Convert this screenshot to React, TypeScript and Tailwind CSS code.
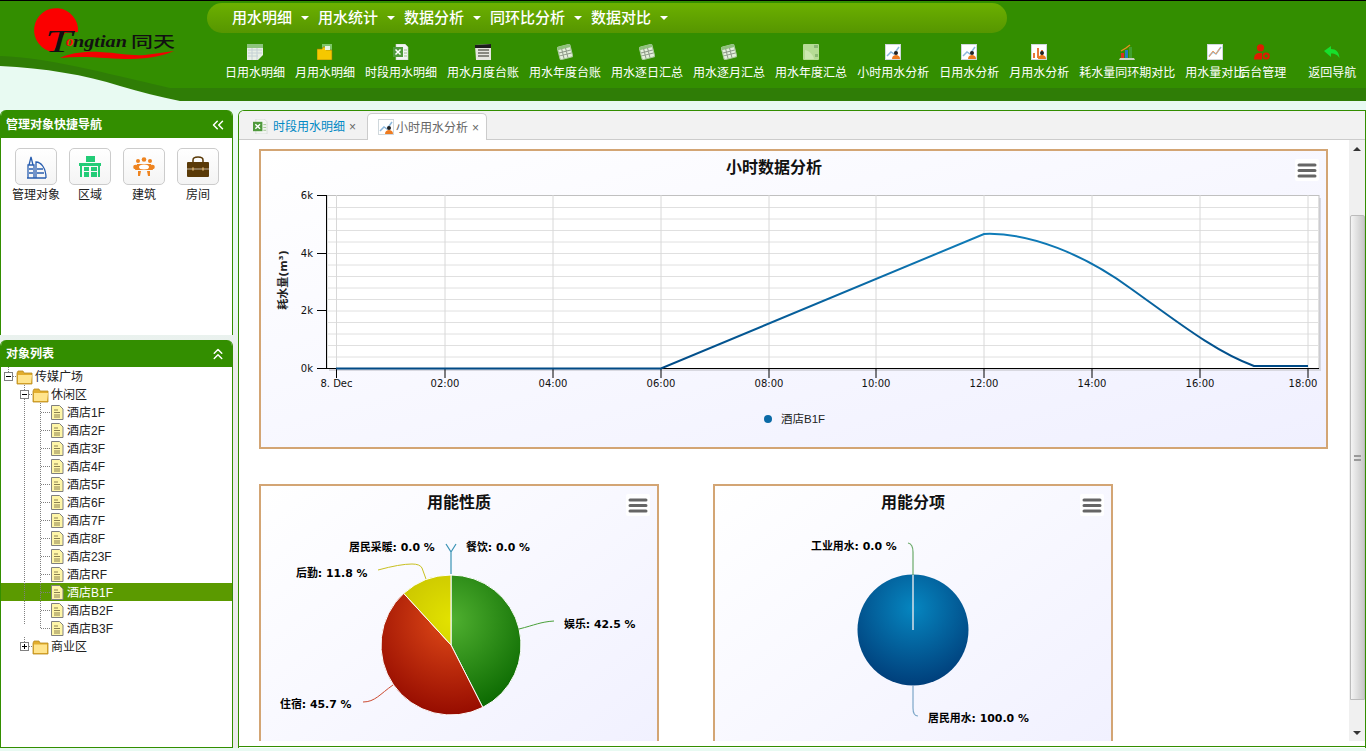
import React from "react";
import { ChevronsLeft, ChevronsUp } from "lucide-react";

const CJK = "'Liberation Sans','Noto Sans CJK SC',sans-serif";
const LABEL = "'DejaVu Sans','Noto Sans CJK SC',sans-serif";

// toolbar icons, all on a 16x16 box
const SheetIcon = () => (
  <svg width="16" height="16" viewBox="0 0 16 16">
    <path d="M0 0h16v11l-5 5H0z" fill="#e8efe6" />
    <rect width="16" height="4" fill="#8cc47c" />
    <path d="M1 6h14M1 9h14M1 12h10M5 4v12M10 4v12" stroke="#c4d0d4" />
  </svg>
);
const FolderSheetIcon = () => (
  <svg width="16" height="16" viewBox="0 0 16 16">
    <rect x="5" y="0" width="10" height="9" fill="#7fc66a" />
    <path d="M0 5h5l1-2h3v3h6v10H0z" fill="#f5c800" stroke="#8a7a10" strokeWidth=".6" />
    <rect x="8" y="2" width="5" height="4" fill="#e9f5e0" />
  </svg>
);
const ExcelIcon = ({ size = 16 }: { size?: number }) => (
  <svg width={size} height={size} viewBox="0 0 16 16">
    <path d="M3 0h9l3 3v13H3z" fill="#f3f5f3" stroke="#c8d0c8" strokeWidth=".6" />
    <rect x="0" y="3" width="10" height="10" fill="#4f9a3c" />
    <path d="M2.500 5.500l5 5M7.500 5.500l-5 5" stroke="#fff" strokeWidth="1.500" />
    <path d="M11 6h3M11 9h3M11 12h3" stroke="#9cc48c" />
  </svg>
);
const CalendarIcon = () => (
  <svg width="16" height="16" viewBox="0 0 16 16">
    <path d="M0 1l16-1v16H1z" fill="#e6e6e0" />
    <path d="M0 1l16-1v4H0z" fill="#1c1c1c" />
    <path d="M3 6h11M3 9h11M3 12h11" stroke="#6a6a60" strokeWidth="1.400" />
  </svg>
);
const TiltSheetIcon = () => (
  <svg width="16" height="16" viewBox="0 0 16 16">
    <g transform="rotate(-14 8 8)">
      <rect x="1.500" y="1.500" width="13" height="13" rx="1.500" fill="#e4efdc" stroke="#a9c79b" />
      <rect x="1.500" y="1.500" width="13" height="3" fill="#8fc27c" />
      <path d="M2 7.500h12M2 10.500h12M5.500 4v10M9.500 4v10" stroke="#8f9a8a" />
    </g>
  </svg>
);
const LedgerIcon = () => (
  <svg width="16" height="16" viewBox="0 0 16 16">
    <rect width="16" height="16" rx="1" fill="#b6dc94" />
    <path d="M2 6c5 1 8 5 9 9H2z" fill="#cce8b0" />
    <rect x="11" y="1" width="4" height="3" fill="#8cb874" />
    <rect x="12" y="10" width="3" height="3" fill="#8cb874" />
  </svg>
);
const ChartIcon = ({ kind = "line" }: { kind?: "line" | "bars" | "plain" }) => (
  <svg width="16" height="16" viewBox="0 0 16 16">
    <rect x=".5" y=".5" width="15" height="15" fill="#fff" stroke="#d0d8dc" />
    {kind === "bars" ? (
      <path d="M3 14V9M7 14V4M11 14V6" stroke="#e8763a" strokeWidth="2" />
    ) : (
      <path d="M2 12l4-4 3 2 5-7" fill="none" stroke="#8cb8dc" strokeWidth="1.500" />
    )}
    {kind === "plain" ? (
      <path d="M2 13l4-6 3 3 4-6" fill="none" stroke="#f0a060" />
    ) : (
      <>
        <circle cx="11" cy="9" r="2" fill="#222" />
        <path d="M7 15c0-3 2-4 4-4s4 1 4 4z" fill="#ee7b20" />
      </>
    )}
  </svg>
);
const CompareIcon = () => (
  <svg width="16" height="16" viewBox="0 0 16 16">
    <path d="M1 14h14l1 2H0z" fill="#c8d4c0" />
    <rect x="2" y="9" width="3" height="5" fill="#d83020" />
    <rect x="6" y="6" width="3" height="8" fill="#2080c0" />
    <rect x="10" y="3" width="3" height="11" fill="#40a030" />
    <path d="M2 7l5-3 4-3" fill="none" stroke="#e89020" strokeWidth="1.400" />
  </svg>
);
const AdminIcon = () => (
  <svg width="16" height="16" viewBox="0 0 16 16">
    <circle cx="6.500" cy="3.800" r="3.600" fill="#dd1c00" />
    <path d="M0 15.500c0-5 2-6.500 6-6.500h2v6.500z" fill="#dd1c00" />
    <circle cx="12.200" cy="12" r="2.600" fill="none" stroke="#dd1c00" strokeWidth="2" />
  </svg>
);
const BackIcon = () => (
  <svg width="16" height="16" viewBox="0 0 16 16">
    <path d="M0 7l7-5v3c5 0 8 3 8.500 9-2-3-4-4.500-8.500-4.500V13z" fill="#17e02c" />
  </svg>
);

const tools: { label: string; icon: React.ReactNode; cls?: string }[] = [
  { label: "日用水明细", icon: <SheetIcon /> },
  { label: "月用水明细", icon: <FolderSheetIcon /> },
  { label: "时段用水明细", icon: <ExcelIcon /> },
  { label: "用水月度台账", icon: <CalendarIcon /> },
  { label: "用水年度台账", icon: <TiltSheetIcon /> },
  { label: "用水逐日汇总", icon: <TiltSheetIcon /> },
  { label: "用水逐月汇总", icon: <TiltSheetIcon /> },
  { label: "用水年度汇总", icon: <LedgerIcon /> },
  { label: "小时用水分析", icon: <ChartIcon /> },
  { label: "日用水分析", icon: <ChartIcon /> },
  { label: "月用水分析", icon: <ChartIcon kind="bars" /> },
  { label: "耗水量同环期对比", icon: <CompareIcon /> },
  { label: "用水量对比", icon: <ChartIcon kind="plain" /> },
  { label: "后台管理", icon: <AdminIcon />, cls: "-ml-[17px]" },
  { label: "返回导航", icon: <BackIcon />, cls: "ml-[12px]" },
];

const menus = ["用水明细", "用水统计", "数据分析", "同环比分析", "数据对比"];

const Logo = () => (
  <svg width="207" height="66" viewBox="0 1 207 66" className="shrink-0">
    {/* sun, cut away under the bar of the T */}
    <path d="M78 32A22 22 0 1 0 53 52L65 33Z" fill="#fb0000" />
    <path d="M60 58C70 53 85 51 100 52C120 53 130 56 145 55C155 54 165 52 174 51C165 55 150 59 130 59C110 59 85 55 60 58Z" fill="#f20000" />
    <text x="45" y="52" fontFamily="'Liberation Serif',serif" fontStyle="italic" fontSize="32" textLength="27" lengthAdjust="spacingAndGlyphs" fill="#111">T</text>
    <text x="66" y="46" fontFamily="'Liberation Serif',serif" fontStyle="italic" fontWeight="700" fontSize="15" fill="#ff0a0a">o</text>
    <text x="73" y="47" fontFamily="'Liberation Serif',serif" fontStyle="italic" fontWeight="700" fontSize="17" textLength="54" lengthAdjust="spacingAndGlyphs" fill="#111">ngtian</text>
    <text x="131" y="47" fontFamily={CJK} fontSize="15" fontWeight="500" textLength="44" lengthAdjust="spacingAndGlyphs" fill="#111">同天</text>
  </svg>
);

const Header = () => (
  <div className="relative h-[101px] border-t border-black bg-[#338e00]">
    <svg width="1366" height="100" viewBox="0 1 1366 100" className="absolute left-0 top-0">
      <path d="M0 56C50 58 100 72 170 88H1366V101H0Z" fill="#2f7d06" />
      <path d="M0 66C45 68 85 75 120 86C140 92 160 97 180 101H0Z" fill="#e8faf2" />
    </svg>
    <div className="relative flex">
      <Logo />
      <div className="flex-1">
        <div className="mt-[2px] flex h-[30px] w-[800px] items-center gap-[9px] rounded-[15px] bg-gradient-to-b from-[#6cb000] to-[#569600] pl-[25px]">
          {menus.map((m) => (
            <div key={m} className="flex items-center gap-[8px] text-[15px] font-medium text-white">
              {m}
              <span className="ml-[1px] h-0 w-0 border-x-[4px] border-t-[4px] border-x-transparent border-t-white" />
            </div>
          ))}
        </div>
      </div>
    </div>
    <div className="absolute left-[225px] top-[43px] flex gap-[10px]">
      {tools.map((t) => (
        <div key={t.label} className={`flex flex-col items-center whitespace-nowrap text-[12px] leading-[18px] text-white ${t.cls ?? ""}`}>
          <div className="mb-[4px] h-[16px]">{t.icon}</div>
          {t.label}
        </div>
      ))}
    </div>
  </div>
);

const quick: { label: string; icon: React.ReactNode }[] = [
  {
    label: "管理对象",
    icon: (
      <svg width="22" height="24" viewBox="0 0 22 24" fill="none" stroke="#2a5fb0" strokeWidth="1.300">
        <path d="M2 23h19M3 23V10h6v13M4 10l2-8 2 8M11 23V7c5 0 10 6 10 16M12 14h6M12 18h7M4 14h4M4 18h4" />
      </svg>
    ),
  },
  {
    label: "区域",
    icon: (
      <svg width="22" height="22" viewBox="0 0 22 22" fill="#22cc77">
        <rect x="7" y="0" width="9" height="6" />
        <rect x="0" y="7" width="22" height="3" />
        <path d="M1 10h2v11H1zM5 11h5v4H5zM5 16h5v5H5zM12 11h6v4h-6zM12 16h6v5h-6zM19 10h2v11h-2z" />
      </svg>
    ),
  },
  {
    label: "建筑",
    icon: (
      <svg width="22" height="20" viewBox="0 0 22 20" fill="#ee8420">
        <circle cx="11" cy="2.500" r="2.300" /><circle cx="5" cy="4" r="2" /><circle cx="17" cy="4" r="2" />
        <circle cx="2.500" cy="10" r="2.300" /><circle cx="19.500" cy="10" r="2.300" />
        <path d="M4 7h14l2 6H2zM5 14h3l-1 5H5zM14 14h3v5h-2z" />
        <ellipse cx="11" cy="10" rx="5" ry="2.500" fill="#fff" />
      </svg>
    ),
  },
  {
    label: "房间",
    icon: (
      <svg width="22" height="22" viewBox="0 0 22 22">
        <path d="M6 6V4c0-2 2-3 5-3s5 1 5 3v2" fill="none" stroke="#5a3a08" strokeWidth="1.500" />
        <rect y="6" width="22" height="15" rx="1" fill="#5a3a08" />
        <path d="M0 13h22" stroke="#fff" strokeWidth=".6" />
        <rect x="5" y="11.500" width="2" height="3" fill="#c8a060" /><rect x="15" y="11.500" width="2" height="3" fill="#c8a060" />
      </svg>
    ),
  },
];

type TreeRow = { label: string; level: 0 | 1 | 2; last?: boolean; active?: boolean; closed?: boolean };
const floors = ["1F", "2F", "3F", "4F", "5F", "6F", "7F", "8F", "23F", "RF", "B1F", "B2F", "B3F"];
const rows: TreeRow[] = [
  { label: "传媒广场", level: 0 },
  { label: "休闲区", level: 1 },
  ...floors.map((f, i): TreeRow => ({ label: `酒店${f}`, level: 2, active: f === "B1F", last: i === floors.length - 1 })),
  { label: "商业区", level: 1, closed: true, last: true },
];

const Toggle = ({ x, open }: { x: number; open: boolean }) => (
  <g>
    <rect x={x + 0.5} y="5.500" width="8" height="8" fill="#fff" stroke="#808080" />
    <path d={`M${x + 2} 9.500h5${open ? "" : `M${x + 4.500} 7v5`}`} stroke="#000" />
  </g>
);
const Folder = ({ x, open }: { x: number; open: boolean }) => (
  <g transform={`translate(${x} 3)`}>
    <path d="M0 3l1-2h5l1 2h8v11H0z" fill="#e2ad2e" stroke="#b88a20" strokeWidth=".8" />
    <path d={open ? "M1 5h14l-1 8H1z" : "M1 4.500h13V13H1z"} fill="#ffe48c" />
  </g>
);
const Doc = ({ x }: { x: number }) => (
  <g transform={`translate(${x} 2)`}>
    <path d="M.5.500h8l3.500 3.500v10.500H.5z" fill="#fff6a8" stroke="#808080" />
    <path d="M3 5h4M3 7.500h6M3 10h6M3 12h6" stroke="#8a8050" />
  </g>
);

const Gutter = ({ row, first }: { row: TreeRow; first: boolean }) => {
  const width = row.level === 0 ? 35 : row.level === 1 ? 51 : 67;
  const dot = { stroke: "#808080", strokeDasharray: "1 1" };
  return (
    <svg width={width} height="18" viewBox={`0 0 ${width} 18`} className="shrink-0">
      {first && <path d="M8.500 0v5" {...dot} />}
      {row.level === 0 && <><Toggle x={4} open /><path d="M13 9.500h4" {...dot} /><Folder x={17} open /></>}
      {row.level > 0 && <path d={`M24.500 0v${row.last ? 5 : 18}`} {...dot} />}
      {row.level === 1 && <><Toggle x={20} open={!row.closed} /><path d="M29 9.500h4" {...dot} /><Folder x={33} open={!row.closed} /></>}
      {row.level === 2 && (
        <>
          <path d={`M40.500 0v${row.last ? 9.500 : 18}M41 9.500h9`} {...dot} />
          <Doc x={51} />
        </>
      )}
    </svg>
  );
};

const Sidebar = () => (
  <div className="flex w-[233px] shrink-0 flex-col gap-[5px]">
    <div className="h-[225px] overflow-hidden rounded-t-[6px] border-x border-[#338e00] bg-white">
      <div className="-mx-px flex h-[28px] items-center justify-between bg-[#338e00] pl-[6px] pr-[6px] pt-px text-[12px] font-bold text-white">
        管理对象快捷导航
        <ChevronsLeft size={18} strokeWidth={2} />
      </div>
      <div className="ml-[14px] mt-[10px] flex gap-[12px]">
        {quick.map((q) => (
          <div key={q.label} className="flex w-[42px] flex-col items-center whitespace-nowrap text-[12px] leading-[18px] text-[#222]">
            <div className="mb-px flex h-[37px] w-[42px] items-center justify-center rounded-[5px] border border-[#ccc] bg-gradient-to-b from-white to-[#f4f4f4]">
              {q.icon}
            </div>
            {q.label}
          </div>
        ))}
      </div>
    </div>
    <div className="flex-1 overflow-hidden rounded-t-[6px] border border-t-0 border-[#338e00] bg-white">
      <div className="-mx-px flex h-[27px] items-center justify-between bg-[#338e00] pl-[6px] pr-[6px] pt-px text-[12px] font-bold text-white">
        对象列表
        <ChevronsUp size={18} strokeWidth={2} />
      </div>
      {rows.map((row, i) => (
        <div
          key={row.label}
          className={`-ml-px flex h-[18px] items-center text-[12px] ${row.active ? "bg-[#5b9a00] text-white" : "text-[#222]"}`}
        >
          <Gutter row={row} first={i === 0} />
          <span className="whitespace-nowrap pt-[2px]">{row.label}</span>
        </div>
      ))}
    </div>
  </div>
);

const Tabs = () => (
  <div className="flex h-[29px] items-end border-b border-[#ccc] bg-[#f2f2f2] pl-[4px] text-[12px]">
    <div className="flex h-[26px] w-[124px] items-center pl-[10px] text-[#0089c4]">
      <ExcelIcon size={15} />
      <span className="ml-[5px] pt-[2px]">时段用水明细</span>
      <span className="ml-[4px] pt-[2px] text-[#666]">×</span>
    </div>
    <div className="-mb-px flex h-[27px] w-[120px] items-center rounded-t-[5px] border border-b-0 border-[#ccc] bg-white pl-[10px] text-[#666]">
      <ChartIcon />
      <span className="ml-[2px] pt-[2px]">小时用水分析</span>
      <span className="ml-[4px] pt-[2px]">×</span>
    </div>
  </div>
);

const Burger = ({ x, y }: { x: number; y: number }) => (
  <g transform={`translate(${x} ${y})`}>
    <rect width="24" height="22" rx="2" fill="#fff" />
    <path d="M4 6h16M4 11.500h16M4 17h16" stroke="#666" strokeWidth="3" strokeLinecap="round" />
  </g>
);

const hours = [336.5, 445, 553, 661, 769, 876, 984, 1092, 1200, 1308];
const hourLabels = ["8. Dec", "02:00", "04:00", "06:00", "08:00", "10:00", "12:00", "14:00", "16:00", "18:00"];

const HourChart = () => (
  <svg width="1065" height="296" viewBox="261 151 1065 296" className="block">
    <defs>
      <linearGradient id="lineFill" gradientUnits="userSpaceOnUse" x1="0" y1="234" x2="0" y2="368">
        <stop offset="0" stopColor="#0f7cb8" />
        <stop offset="1" stopColor="#004a86" />
      </linearGradient>
    </defs>
    <text x="774" y="173" textAnchor="middle" fontFamily={CJK} fontSize="16" fontWeight="700" fill="#111">小时数据分析</text>
    <Burger x={1295} y={159} />
    <rect x="329" y="198" width="992" height="173" fill="#d8d8e0" />
    <rect x="327" y="195.500" width="992" height="173" fill="#fff" stroke="#c0c0c0" />
    {Array.from({ length: 15 }, (_, i) => (
      <path key={i} d={`M327 ${207.5 + i * 11.5}H1319`} stroke="#e0e0e0" />
    ))}
    {hours.map((x) => (
      <path key={x} d={`M${x} 195V368`} stroke="#d8d8d8" />
    ))}
    <path d="M326.500 195V369M317 195.500H327M317 253.500H327M317 310.500H327M317 368.500H1319" stroke="#000" />
    {hours.map((x, i) => (
      <g key={x}>
        <path d={`M${x} 369V378`} stroke="#000" />
        <text x={i === 9 ? 1303 : x} y="387" textAnchor="middle" fontFamily={LABEL} fontSize="10" fill="#111">{hourLabels[i]}</text>
      </g>
    ))}
    {[["6k", 199], ["4k", 257], ["2k", 314], ["0k", 372]].map(([t, y]) => (
      <text key={t} x="313" y={y} textAnchor="end" fontFamily={LABEL} fontSize="10" fill="#111">{t}</text>
    ))}
    <text transform="translate(287 280) rotate(-90)" textAnchor="middle" fontFamily={LABEL} fontSize="11" fontWeight="700" fill="#222">耗水量(m³)</text>
    <path d="M336 368.500H661L984 234C1030 232 1085 255 1130 288C1175 320 1215 352 1254 366H1308" fill="none" stroke="url(#lineFill)" strokeWidth="2" />
    <circle cx="768" cy="419" r="4" fill="#0a6aa6" />
    <text x="781" y="423" fontFamily={CJK} fontSize="11.500" fill="#222">酒店B1F</text>
  </svg>
);

const slicePath = (cx: number, cy: number, r: number, from: number, to: number) => {
  const a = (from * 2 - 0.5) * Math.PI;
  const b = (to * 2 - 0.5) * Math.PI;
  const large = to - from > 0.5 ? 1 : 0;
  return `M${cx} ${cy}L${cx + r * Math.cos(a)} ${cy + r * Math.sin(a)}A${r} ${r} 0 ${large} 1 ${cx + r * Math.cos(b)} ${cy + r * Math.sin(b)}Z`;
};

const Grad = ({ id, inner, outer }: { id: string; inner: string; outer: string }) => (
  <radialGradient id={id} gradientUnits="userSpaceOnUse" cx="451" cy="620" r="95">
    <stop offset="0" stopColor={inner} />
    <stop offset="1" stopColor={outer} />
  </radialGradient>
);

const PieLabel = ({ x, y, name, value }: { x: number; y: number; name: string; value: string }) => (
  <text x={x} y={y} fontFamily={LABEL} fontSize="10.900" fontWeight="700" fill="#000">{`${name}: ${value} %`}</text>
);

const NaturePie = () => (
  <svg width="396" height="296" viewBox="261 486 396 296" className="block">
    <defs>
      <Grad id="g1" inner="#50b030" outer="#0a6800" />
      <Grad id="g2" inner="#e04a18" outer="#960c00" />
      <Grad id="g3" inner="#e2e200" outer="#bcb400" />
    </defs>
    <text x="459" y="508" textAnchor="middle" fontFamily={CJK} fontSize="16" fontWeight="700" fill="#111">用能性质</text>
    <Burger x={626} y={494} />
    <path d={slicePath(451, 645, 70, 0, 0.425)} fill="url(#g1)" stroke="#fff" />
    <path d={slicePath(451, 645, 70, 0.425, 0.882)} fill="url(#g2)" stroke="#fff" />
    <path d={slicePath(451, 645, 70, 0.882, 1)} fill="url(#g3)" stroke="#fff" />
    <path d="M451 574V552L446 544M451 552L456 544" fill="none" stroke="#3a93b5" strokeWidth="1.200" />
    <path d="M519 629C535 625 540 622 554 621" fill="none" stroke="#4aa03a" />
    <path d="M393 685C380 694 375 702 363 702" fill="none" stroke="#cc4a30" />
    <path d="M426 579L422 568Q420 564 412 564Q400 564 378 570" fill="none" stroke="#c8c020" />
    <PieLabel x={349} y={551} name="居民采暖" value="0.0" />
    <PieLabel x={466} y={551} name="餐饮" value="0.0" />
    <PieLabel x={296} y={577} name="后勤" value="11.8" />
    <PieLabel x={564} y={628} name="娱乐" value="42.5" />
    <PieLabel x={280} y={708} name="住宿" value="45.7" />
  </svg>
);

const ItemPie = () => (
  <svg width="396" height="296" viewBox="715 486 396 296" className="block">
    <defs>
      <radialGradient id="g4" gradientUnits="userSpaceOnUse" cx="913" cy="608" r="80">
        <stop offset="0" stopColor="#0686c0" />
        <stop offset="1" stopColor="#003c78" />
      </radialGradient>
    </defs>
    <text x="913" y="508" textAnchor="middle" fontFamily={CJK} fontSize="16" fontWeight="700" fill="#111">用能分项</text>
    <Burger x={1080} y={494} />
    <circle cx="913" cy="630" r="55.500" fill="url(#g4)" />
    <path d="M913 630V575" stroke="#d8e0e8" strokeWidth="1.500" />
    <path d="M913 575V552Q913 544 908 543" fill="none" stroke="#6aaa6a" strokeWidth="1.200" />
    <path d="M913 686V708Q913 716 918 716" fill="none" stroke="#7ca6c8" strokeWidth="1.200" />
    <PieLabel x={811} y={550} name="工业用水" value="0.0" />
    <PieLabel x={928} y={722} name="居民用水" value="100.0" />
  </svg>
);

const Card = ({ className, children }: { className: string; children: React.ReactNode }) => (
  <div className={`shrink-0 border-2 border-[#d3a574] bg-gradient-to-br from-white to-[#f0f0ff] ${className}`}>{children}</div>
);

const Scrollbar = () => (
  <div className="flex w-[16px] shrink-0 flex-col items-center bg-[#f0f0f0]">
    <div className="mt-[7px] h-0 w-0 border-x-[4px] border-b-[4px] border-x-transparent border-b-[#333]" />
    <div className="mt-[64px] flex h-[485px] w-[15px] shrink-0 items-center justify-center rounded-t-[2px] border border-[#bbb] bg-gradient-to-r from-[#f4f4f4] to-[#c8c8c8]">
      <div className="h-[6px] w-[7px] border-y-2 border-[#999]" />
    </div>
    <div className="mt-auto mb-[6px] h-0 w-0 border-x-[4px] border-t-[4px] border-x-transparent border-t-[#333]" />
  </div>
);

const Main = () => (
  <div className="flex min-w-0 flex-1 flex-col overflow-hidden rounded-tl-[6px] border border-b-0 border-[#338e00] bg-white">
    <Tabs />
    <div className="flex h-[601px]">
      <div className="flex min-w-0 flex-1 flex-col overflow-hidden pl-[20px] pt-[9px]">
        <Card className="h-[300px] w-[1069px]">
          <HourChart />
        </Card>
        <div className="mt-[35px] flex gap-[54px]">
          <Card className="h-[300px] w-[400px]">
            <NaturePie />
          </Card>
          <Card className="h-[300px] w-[400px]">
            <ItemPie />
          </Card>
        </div>
      </div>
      <Scrollbar />
    </div>
    <div className="h-[6px] border-b border-[#338e00]" />
  </div>
);

export default function App() {
  return (
    <div className="h-[751px] w-[1366px] overflow-hidden bg-[#e8faf2]" style={{ fontFamily: CJK }}>
      <Header />
      <div className="mt-[9px] flex h-[638px] gap-[5px] bg-gradient-to-b from-[#e8faf2] from-[30%] to-[#ebebeb] to-[40%]">
        <Sidebar />
        <Main />
      </div>
    </div>
  );
}
